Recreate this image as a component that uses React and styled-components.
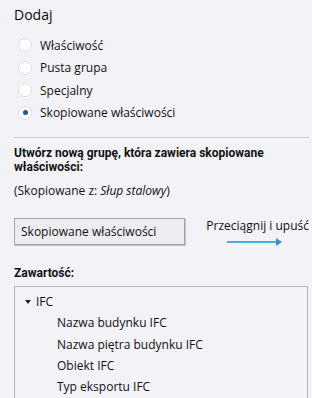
import React from "react";
import styled, { createGlobalStyle } from "styled-components";

const Global = createGlobalStyle`
  html, body { margin: 0; padding: 0; background: #f2f2f7; }
  body { font-family: "Open Sans", "Noto Sans", sans-serif; color: #111; font-size: 12px; }
`;

const Page = styled.div`
  width: 312px;
  height: 398px;
  overflow: hidden;
  box-sizing: border-box;
  padding: 6px 3px 0 14px;
  background: #f2f2f7;
`;

const Title = styled.div`
  font-size: 14px;
  line-height: 18px;
  color: #0a0a0a;
`;

const RadioList = styled.div`
  display: flex;
  flex-direction: column;
  margin-top: 10px;
  padding-left: 4px;
`;

const RadioRow = styled.label`
  display: flex;
  align-items: center;
  gap: 8px;
  height: 22.5px;
  font-size: 12px;
`;

const Circle = styled.span`
  width: 14px;
  height: 14px;
  box-sizing: border-box;
  border-radius: 50%;
  background: #ffffff;
  border: 1px solid #dcdce2;
  display: flex;
  align-items: center;
  justify-content: center;
  &::after {
    content: "";
    width: 5px;
    height: 5px;
    border-radius: 50%;
    background: ${(p) => (p.$checked ? "#1b5c98" : "transparent")};
  }
`;

const Separator = styled.div`
  height: 1px;
  background: #cfcfd4;
  margin-top: 13px;
`;

const Bold = styled.div`
  font-family: Roboto, "Open Sans", sans-serif;
  font-weight: 700;
  font-size: 12px;
  line-height: 14px;
  margin-top: ${(p) => p.$mt || 0}px;
`;

const Note = styled.div`
  font-size: 12px;
  line-height: 16px;
  margin-top: 9px;
  em { font-style: italic; }
`;

const DragRow = styled.div`
  display: flex;
  align-items: flex-start;
  margin-top: 19px;
`;

const Chip = styled.div`
  width: 177px;
  height: 27px;
  box-sizing: border-box;
  border: 1px solid #a3a3a8;
  box-shadow: 1px 1px 0 #c4c4c8;
  background: #ececf1;
  padding-left: 6px;
  display: flex;
  align-items: center;
  font-size: 12px;
`;

const Hint = styled.div`
  margin-left: 21px;
  display: flex;
  flex-direction: column;
  font-size: 12px;
  line-height: 16px;
  white-space: nowrap;
`;

const ArrowBox = styled.div`
  margin-top: 4px;
  margin-left: 21px;
  height: 8px;
  display: flex;
`;

const TreeBox = styled.div`
  margin-top: 6px;
  margin-right: 1px;
  border: 1px solid #b3b3b8;
  border-bottom: none;
  height: 200px;
  padding-top: 4px;
  display: flex;
  flex-direction: column;
`;

const TreeRow = styled.div`
  display: flex;
  align-items: center;
  height: 21.3px;
  flex-shrink: 0;
  padding-left: ${(p) => p.$indent}px;
  font-size: 12px;
`;

const Caret = styled.span`
  width: 0;
  height: 0;
  border-left: 3.5px solid transparent;
  border-right: 3.5px solid transparent;
  border-top: 4px solid #222;
  margin-right: 5px;
`;

export default function App() {
  const options = ["Właściwość", "Pusta grupa", "Specjalny", "Skopiowane właściwości"];
  const children = ["Nazwa budynku IFC", "Nazwa piętra budynku IFC", "Obiekt IFC", "Typ eksportu IFC"];
  return (
    <>
      <Global />
      <Page>
        <Title>Dodaj</Title>
        <RadioList>
          {options.map((o, i) => (
            <RadioRow key={o}>
              <Circle $checked={i === 3} />
              {o}
            </RadioRow>
          ))}
        </RadioList>
        <Separator />
        <Bold $mt={8}>
          Utwórz nową grupę, która zawiera skopiowane
          <br />
          właściwości:
        </Bold>
        <Note>
          (Skopiowane z: <em>Słup stalowy</em>)
        </Note>
        <DragRow>
          <Chip>Skopiowane właściwości</Chip>
          <Hint>
            Przeciągnij i upuść
            <ArrowBox>
              <svg width="56" height="8" viewBox="0 0 56 8">
                <line x1="0" y1="4" x2="50" y2="4" stroke="#4aaae2" strokeWidth="2" />
                <polygon points="49,0 55,4 49,8" fill="#2f8fd0" />
              </svg>
            </ArrowBox>
          </Hint>
        </DragRow>
        <Bold $mt={20}>Zawartość:</Bold>
        <TreeBox>
          <TreeRow $indent={10}>
            <Caret />
            IFC
          </TreeRow>
          {children.map((c) => (
            <TreeRow key={c} $indent={42}>
              {c}
            </TreeRow>
          ))}
        </TreeBox>
      </Page>
    </>
  );
}
